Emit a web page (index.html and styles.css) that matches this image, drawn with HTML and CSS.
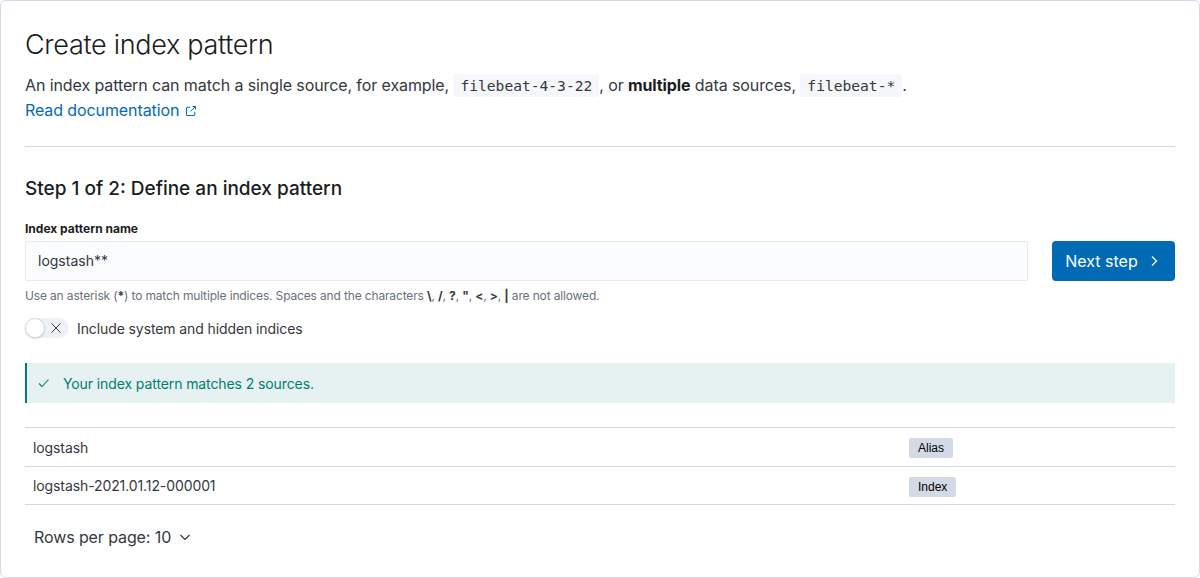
FILE: index.html
```html
<!DOCTYPE html>
<html>
<head>
<meta charset="utf-8">
<link rel="stylesheet" href="styles.css">
</head>
<body>
<div class="panel">
  <h1 class="title">Create index pattern</h1>
  <p class="desc">An index pattern can match a single source, for example, <code class="code">filebeat-4-3-22</code>, or <strong>multiple</strong> data sources, <code class="code">filebeat-*</code>.</p>
  <a class="link" href="#">Read documentation <svg class="ext" width="12" height="12" viewBox="0 0 16 16"><path d="M13 9v4.5a.5.5 0 0 1-.5.5h-10a.5.5 0 0 1-.5-.5v-10a.5.5 0 0 1 .5-.5H7" fill="none" stroke="currentColor" stroke-width="1.3"/><path d="M10 2h4v4M14 2L7.5 8.5" fill="none" stroke="currentColor" stroke-width="1.3"/></svg></a>
  <hr class="rule">
  <h2 class="step">Step 1 of 2: Define an index pattern</h2>
  <div class="formrow">
    <div class="field">
      <label class="label">Index pattern name</label>
      <div class="input">logstash**</div>
      <div class="help">Use an asterisk (<b>*</b>) to match multiple indices. Spaces and the characters <b>\</b>, <b>/</b>, <b>?</b>, <b>"</b>, <b>&lt;</b>, <b>&gt;</b>, <b>|</b> are not allowed.</div>
    </div>
    <button class="btn">Next step <svg width="16" height="16" viewBox="0 0 16 16"><path d="M6 3.5L10.5 8 6 12.5" fill="none" stroke="currentColor" stroke-width="1.2"/></svg></button>
  </div>
  <div class="toggle-row">
    <span class="switch"><span class="knob"></span><svg class="xmark" width="12" height="12" viewBox="0 0 12 12"><path d="M1.5 1.5l9 9M10.5 1.5l-9 9" stroke="#343741" stroke-width="1"/></svg></span>
    <span class="toggle-label">Include system and hidden indices</span>
  </div>
  <div class="callout">
    <svg width="16" height="16" viewBox="0 0 16 16"><path d="M3 8.5l3 3 6.5-7" fill="none" stroke="#017d73" stroke-width="1.1"/></svg>
    <span>Your index pattern matches 2 sources.</span>
  </div>
  <div class="table">
    <div class="row r1"><span class="name">logstash</span><span class="type"><span class="badge">Alias</span></span></div>
    <div class="row r2"><span class="name">logstash-2021.01.12-000001</span><span class="type"><span class="badge">Index</span></span></div>
  </div>
  <div class="pager">Rows per page: 10 <svg width="16" height="16" viewBox="0 0 16 16"><path d="M3.5 6l4.5 4.5L12.5 6" fill="none" stroke="#343741" stroke-width="1.2"/></svg></div>
</div>
</body>
</html>
```
FILE: styles.css
```css
* { box-sizing: border-box; }
html, body { margin: 0; padding: 0; background: #fff; }
body { font-family: Inter, "Noto Sans", sans-serif; color: #343741; width: 1200px; height: 578px; letter-spacing: -0.1px; }
.panel {
  width: 1200px; height: 578px;
  border: 1px solid #d3dae6; border-radius: 6px;
  padding: 24px 24px 0 24px;
}
.title { margin: 0; font-size: 27px; font-weight: 300; line-height: 40px; color: #1a1c21; letter-spacing: -0.3px; }
.desc { margin: 8px 0 0; font-size: 16px; line-height: 24px; }
.desc strong { font-weight: 700; color: #1a1c21; }
.code {
  font-family: "DejaVu Sans Mono", "Liberation Mono", monospace; font-size: 14.6px; letter-spacing: 0;
  background: #f5f7fa; color: #343741; padding: 3px 7px; border-radius: 3px;
}
.link { display: inline-block; color: #006bb4; text-decoration: none; font-size: 16px; line-height: 24px; }
.ext { vertical-align: -1px; margin-left: 1px; }
.rule { border: 0; border-top: 1px solid #d3dae6; margin: 24px 0 0; }
.step { margin: 28px 0 0; font-size: 19px; font-weight: 500; line-height: 28px; color: #1a1c21; letter-spacing: 0; }
.formrow { display: flex; gap: 24px; margin-top: 17px; align-items: flex-start; }
.field { flex: 1; }
.label { display: block; font-size: 12px; font-weight: 700; line-height: 18px; color: #1a1c21; margin-bottom: 3px; letter-spacing: 0; }
.input {
  height: 40px; background: #fbfcfd; border: 1px solid #e6ebf2; border-radius: 2px;
  padding: 0 12px; font-size: 14px; line-height: 38px; color: #343741; letter-spacing: 0;
}
.help { font-size: 12px; line-height: 18px; color: #69707d; margin-top: 6px; letter-spacing: -0.15px; }
.help b { color: #343741; font-weight: 700; }
.btn {
  margin-top: 21px; width: 123px; height: 40px; background: #006bb4; color: #fff;
  border: 0; border-radius: 4px; font-family: Inter, sans-serif; font-size: 16px; letter-spacing: 0;
  display: flex; align-items: center; justify-content: center; gap: 8px; padding: 0;
}
.toggle-row { display: flex; align-items: center; gap: 8px; margin-top: 12px; height: 22px; }
.switch {
  position: relative; width: 44px; height: 20px; border-radius: 10px; background: #eef1f5;
  display: inline-block;
}
.knob {
  position: absolute; left: 0; top: 0; width: 20px; height: 20px; border-radius: 50%;
  background: #fff; border: 1px solid #d3dae6; box-shadow: 0 1px 2px rgba(0,0,0,0.15);
}
.xmark { position: absolute; left: 25px; top: 4px; }
.toggle-label { font-size: 14px; color: #343741; }
.callout {
  margin-top: 24px; height: 40px; background: #e6f1f1; border-left: 2px solid #017d73;
  display: flex; align-items: center; gap: 11px; padding-left: 9px;
  font-size: 14px; color: #017d73;
}
.table { margin-top: 24px; border-top: 1px solid #d3dae6; }
.row { display: flex; border-bottom: 1px solid #d3dae6; align-items: center; font-size: 14px; }
.r1 { height: 39px; }
.r2 { height: 38px; }
.row .name { flex: 1; padding-left: 8px; }
.row .type { width: 266px; }
.badge {
  display: inline-block; background: #d3dae6; color: #000; font-family: "Liberation Sans", Arial, sans-serif;
  font-size: 12px; line-height: 20px; padding: 0 9px; border-radius: 2px; margin-top: 2px; letter-spacing: 0;
}
.pager { margin-top: 22px; padding-left: 9px; font-size: 16px; display: flex; align-items: center; gap: 6px; }
```
